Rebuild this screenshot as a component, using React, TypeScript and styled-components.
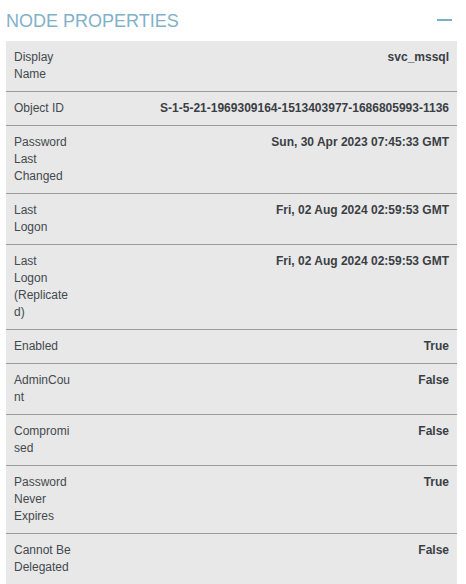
import React from "react";
import styled, { createGlobalStyle } from "styled-components";

const Global = createGlobalStyle`
  html, body { margin: 0; padding: 0; background: #ffffff; }
  body { font-family: "Liberation Sans", Arial, sans-serif; }
`;

const Panel = styled.div`
  width: 466px;
  box-sizing: border-box;
  padding: 0 9px 0 6px;
`;

const Header = styled.div`
  height: 41px;
  display: flex;
  align-items: center;
  justify-content: space-between;
`;

const Title = styled.div`
  font-size: 18px;
  line-height: 22px;
  color: #7fb1c9;
  font-weight: 400;
`;

const Collapse = styled.div`
  width: 15px;
  height: 2px;
  background: #7aafc8;
  margin-right: 5px;
  margin-top: -1px;
`;

const Table = styled.div`
  background: #e8e8e8;
  display: flex;
  flex-direction: column;
`;

const Row = styled.div<{ $last?: boolean }>`
  display: grid;
  grid-template-columns: 74px 1fr;
  border-bottom: ${(p) => (p.$last ? "none" : "1px solid #9c9c9c")};
  font-size: 12px;
  line-height: 17px;
`;

const Label = styled.div`
  padding: 8px 8px;
  color: #44494e;
  overflow-wrap: anywhere;
`;

const Value = styled.div`
  padding: 8px 8px;
  text-align: right;
  font-weight: 700;
  color: #3a3f45;
`;

const rows: [string, string][] = [
  ["Display Name", "svc_mssql"],
  ["Object ID", "S-1-5-21-1969309164-1513403977-1686805993-1136"],
  ["Password Last Changed", "Sun, 30 Apr 2023 07:45:33 GMT"],
  ["Last Logon", "Fri, 02 Aug 2024 02:59:53 GMT"],
  ["Last Logon (Replicated)", "Fri, 02 Aug 2024 02:59:53 GMT"],
  ["Enabled", "True"],
  ["AdminCount", "False"],
  ["Compromised", "False"],
  ["Password Never Expires", "True"],
  ["Cannot Be Delegated", "False"],
];

export default function App() {
  return (
    <>
      <Global />
      <Panel>
        <Header>
          <Title>NODE PROPERTIES</Title>
          <Collapse />
        </Header>
        <Table>
          {rows.map(([k, v], i) => (
            <Row key={k} $last={i === rows.length - 1}>
              <Label>{k}</Label>
              <Value>{v}</Value>
            </Row>
          ))}
        </Table>
      </Panel>
    </>
  );
}
